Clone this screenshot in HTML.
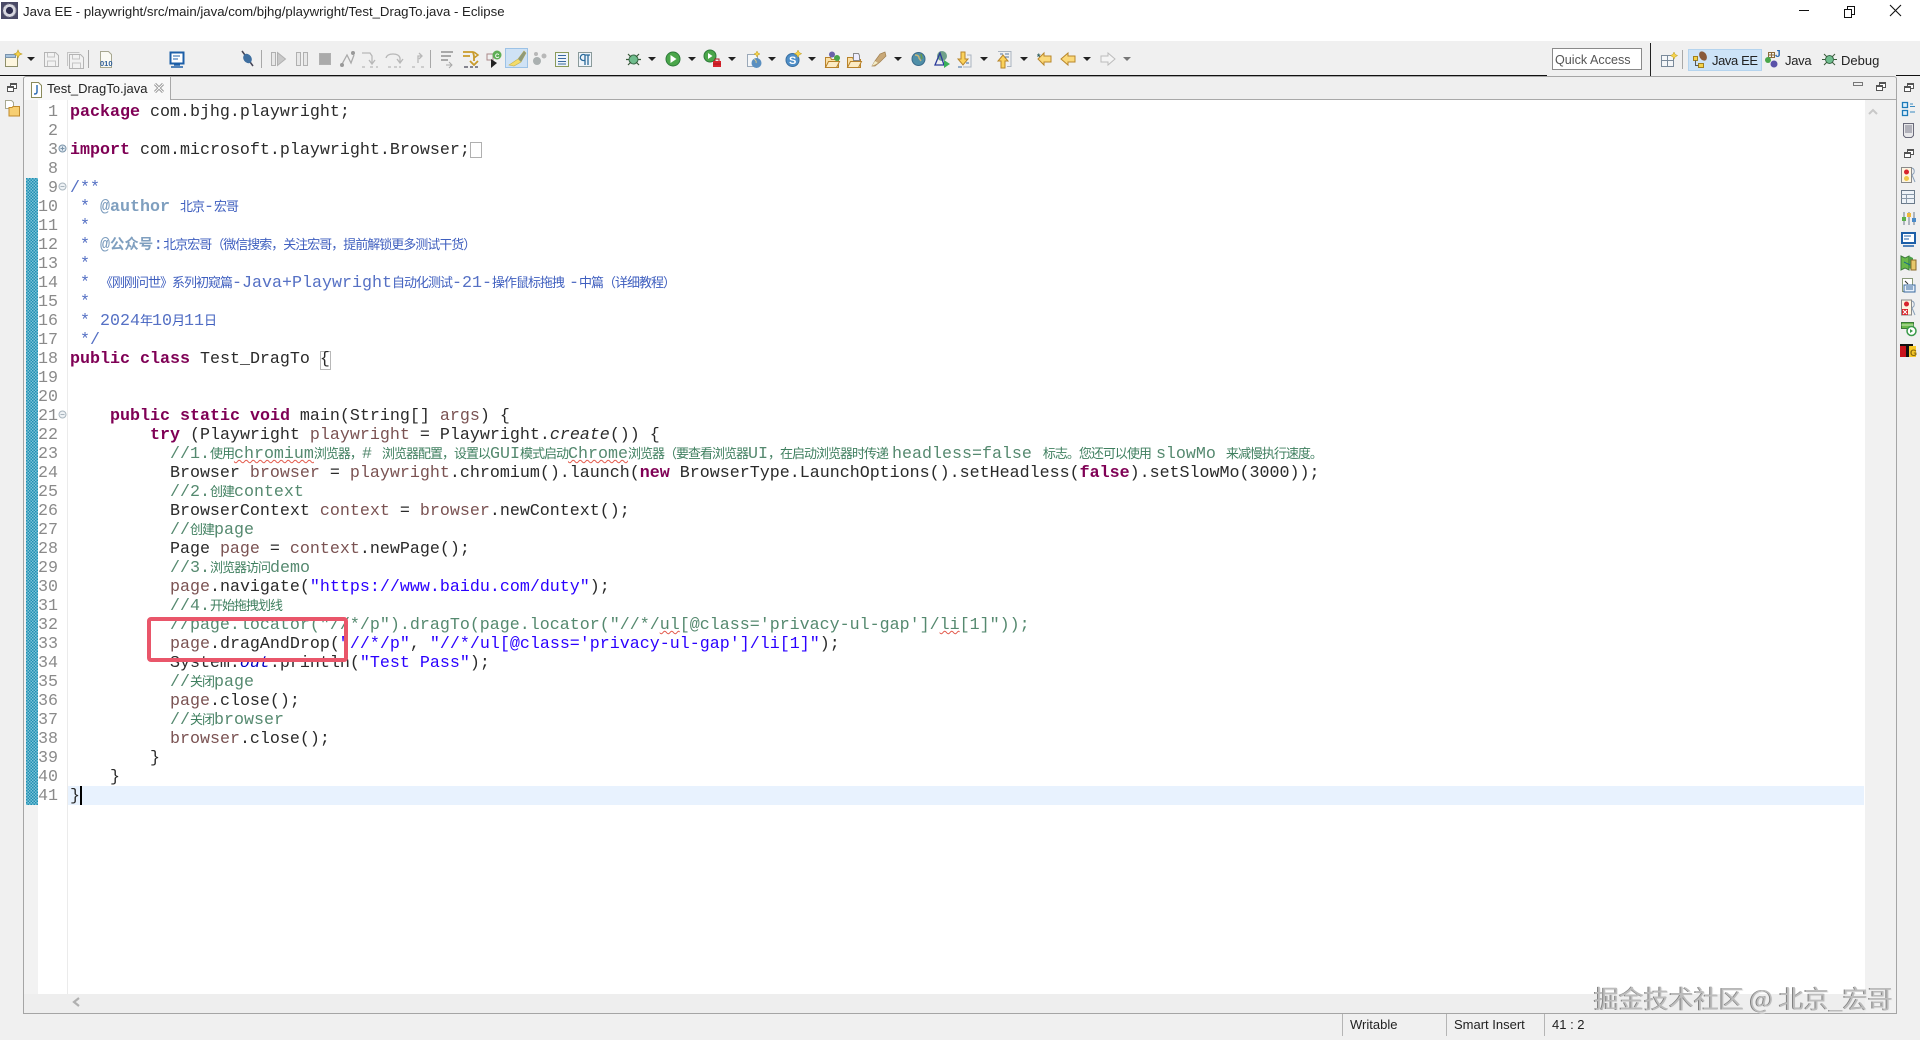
<!DOCTYPE html>
<html lang="zh"><head><meta charset="utf-8"><title>Java EE - Eclipse</title>
<style>
html,body{margin:0;padding:0;width:1920px;height:1040px;overflow:hidden;background:#fff}
body{position:relative;font-family:"Liberation Sans","Noto Sans CJK SC",sans-serif;color:#222}
.a{position:absolute}
.l{position:absolute;left:70px;margin-top:1px;height:19px;line-height:19px;white-space:pre;font-family:"Liberation Mono","Noto Sans CJK SC",monospace;font-size:16.67px;color:#2a2a2a}
.n{position:absolute;left:30px;margin-top:1px;width:28px;text-align:right;height:19px;line-height:19px;font-family:"Liberation Mono",monospace;font-size:16.67px;color:#8a8a8a}
.c{font-family:"Noto Sans CJK SC",sans-serif;font-size:13px;letter-spacing:-1px;font-weight:400;line-height:0}
.k{color:#7f0055;font-weight:700}.g{color:#55896f}.j{color:#5570c4}.t{color:#7f9fbf;font-weight:700}.s{color:#2a00ff}.v{color:#7a5252}.f{color:#0000c0;font-style:italic}
.g .c{color:#3f7f5f}.j .c{color:#3f5fbf}
.w{text-decoration:underline wavy #e2584a 1px;text-underline-offset:1px}
.u{font-size:13px;line-height:16px;white-space:pre}
</style></head><body>

<div class="a" style="left:0;top:41px;width:1920px;height:35px;background:#f0f0f0"></div>
<div class="a" style="left:0;top:76px;width:24px;height:964px;background:#f0f0f0"></div>
<div class="a" style="left:1896px;top:76px;width:24px;height:964px;background:#f0f0f0"></div>
<div class="a" style="left:0;top:1013px;width:1920px;height:27px;background:#f0f0f0"></div>
<div class="a" style="left:0;top:75px;width:1547px;height:1px;background:#111"></div>
<div class="a" style="left:1896px;top:75px;width:24px;height:1px;background:#111"></div>
<div class="a" style="left:1650px;top:43px;width:1px;height:33px;background:#222"></div>

<div class="a" style="left:24px;top:77px;width:1872px;height:22px;background:#efefef"></div>
<div class="a" style="left:24px;top:99px;width:1872px;height:1px;background:#a8a8a8"></div>
<div class="a" style="left:24px;top:77px;width:147px;height:23px;background:#f8f8f8;border-right:1px solid #a8a8a8;box-sizing:border-box"></div>
<div class="a" style="left:23px;top:76px;width:1874px;height:938px;box-sizing:border-box;border:1px solid #a5a5a5;border-radius:3px 3px 0 0"></div>
<div class="a" style="left:24px;top:100px;width:14px;height:913px;background:#f2f2f2"></div>
<div class="a" style="left:24px;top:994px;width:1872px;height:19px;background:#eeeeee"></div>
<div class="a" style="left:1865px;top:100px;width:31px;height:913px;background:#f1f1f1"></div>
<div class="a" style="left:67px;top:100px;width:1px;height:894px;background:#ebebeb"></div>
<div class="a" style="left:26px;top:178px;width:12px;height:627px;background-color:#2f9dbd;background-image:conic-gradient(#7cc3d8 25%,#1f8fb2 0 50%,#7cc3d8 0 75%,#1f8fb2 0);background-size:3px 3px"></div>
<div class="a" style="left:68px;top:786px;width:1796px;height:19px;background:#e8f2fe"></div>
<div class="a" style="left:80px;top:786px;width:2px;height:19px;background:#000"></div>
<div class="a" style="left:470px;top:142px;width:10px;height:14px;border:1px solid #b0b0b0"></div>
<div class="a" style="left:320px;top:351px;width:9px;height:17px;border:1px solid #b8b8b8"></div>

<div class="a u" style="left:23px;top:4px;font-size:13.2px">Java EE - playwright/src/main/java/com/bjhg/playwright/Test_DragTo.java - Eclipse</div>
<div class="a u" style="left:47px;top:81px">Test_DragTo.java</div>
<div class="a" style="left:1552px;top:48px;width:90px;height:22px;box-sizing:border-box;border:1px solid #8a8a8a;background:#fff;font-size:12.6px;line-height:22px;padding-left:2px;color:#555;white-space:pre">Quick Access</div>
<div class="a" style="left:1688px;top:49px;width:74px;height:22px;background:#cde3f7;border:1px solid #b5d4ee;box-sizing:border-box"></div>
<div class="a u" style="left:1712px;top:53px;letter-spacing:-.4px">Java EE</div>
<div class="a u" style="left:1785px;top:53px;letter-spacing:-.3px">Java</div>
<div class="a u" style="left:1841px;top:53px">Debug</div>
<div class="a" style="left:505px;top:48px;width:23px;height:20px;background:#cfe2f5;border:1px solid #9cc2e6;box-sizing:border-box"></div>

<div class="a" style="left:1342px;top:1014px;width:1px;height:22px;background:#b5b5b5"></div>
<div class="a" style="left:1446px;top:1014px;width:1px;height:22px;background:#b5b5b5"></div>
<div class="a" style="left:1544px;top:1014px;width:1px;height:22px;background:#b5b5b5"></div>
<div class="a u" style="left:1350px;top:1017px">Writable</div>
<div class="a u" style="left:1454px;top:1017px">Smart Insert</div>
<div class="a u" style="left:1552px;top:1017px">41 : 2</div>

<div class="n" style="top:102px">1</div><div class="n" style="top:121px">2</div><div class="n" style="top:140px">3</div><div class="n" style="top:159px">8</div><div class="n" style="top:178px">9</div>
<div class="n" style="top:197px">10</div><div class="n" style="top:216px">11</div><div class="n" style="top:235px">12</div><div class="n" style="top:254px">13</div><div class="n" style="top:273px">14</div><div class="n" style="top:292px">15</div><div class="n" style="top:311px">16</div><div class="n" style="top:330px">17</div><div class="n" style="top:349px">18</div><div class="n" style="top:368px">19</div><div class="n" style="top:387px">20</div><div class="n" style="top:406px">21</div><div class="n" style="top:425px">22</div><div class="n" style="top:444px">23</div><div class="n" style="top:463px">24</div><div class="n" style="top:482px">25</div><div class="n" style="top:501px">26</div><div class="n" style="top:520px">27</div><div class="n" style="top:539px">28</div><div class="n" style="top:558px">29</div><div class="n" style="top:577px">30</div><div class="n" style="top:596px">31</div><div class="n" style="top:615px">32</div><div class="n" style="top:634px">33</div><div class="n" style="top:653px">34</div><div class="n" style="top:672px">35</div><div class="n" style="top:691px">36</div><div class="n" style="top:710px">37</div><div class="n" style="top:729px">38</div><div class="n" style="top:748px">39</div><div class="n" style="top:767px">40</div><div class="n" style="top:786px">41</div>

<div class="l" style="top:102px"><span class="k">package</span> com.bjhg.playwright;</div>
<div class="l" style="top:140px"><span class="k">import</span> com.microsoft.playwright.Browser;</div>
<div class="l j" style="top:178px">/**</div>
<div class="l j" style="top:197px"> * <span class="t">@author</span> <span class="c">北京</span>-<span class="c">宏哥</span></div>
<div class="l j" style="top:216px"> *</div>
<div class="l j" style="top:235px"> * <span class="t">@<span style="font-family:'Noto Sans CJK SC',sans-serif;font-size:14.4px;line-height:0">公众号</span></span>:<span class="c">北京宏哥（微信搜索，关注宏哥，提前解锁更多测试干货）</span></div>
<div class="l j" style="top:254px"> *</div>
<div class="l j" style="top:273px"> * <span class="c">《刚刚问世》系列初窥篇</span>-Java+Playwright<span class="c">自动化测试</span>-21-<span class="c">操作鼠标拖拽</span><span style="margin-left:5px">-</span><span class="c">中篇（详细教程）</span></div>
<div class="l j" style="top:292px"> *</div>
<div class="l j" style="top:311px"> * 2024<span class="c">年</span>10<span class="c">月</span>11<span class="c">日</span></div>
<div class="l j" style="top:330px"> */</div>
<div class="l" style="top:349px"><span class="k">public</span> <span class="k">class</span> Test_DragTo {</div>
<div class="l" style="top:406px">    <span class="k">public</span> <span class="k">static</span> <span class="k">void</span> main(String[] <span class="v">args</span>) {</div>
<div class="l" style="top:425px">        <span class="k">try</span> (Playwright <span class="v">playwright</span> = Playwright.<i>create</i>()) {</div>
<div class="l g" style="top:444px">          //1.<span class="c">使用</span><span class="w">chromium</span><span class="c">浏览器，</span># <span class="c">浏览器配置，设置以</span>GUI<span class="c">模式启动</span><span class="w">Chrome</span><span class="c">浏览器（要查看浏览器</span>UI<span class="c">，在启动浏览器时传递</span><span style="margin-left:4px">headless=false</span><span class="c" style="margin-left:11px">标志。您还可以使用</span><span style="margin-left:5px">slowMo</span><span class="c" style="margin-left:10px">来减慢执行速度。</span></div>
<div class="l" style="top:463px">          Browser <span class="v">browser</span> = <span class="v">playwright</span>.chromium().launch(<span class="k">new</span> BrowserType.LaunchOptions().setHeadless(<span class="k">false</span>).setSlowMo(3000));</div>
<div class="l g" style="top:482px">          //2.<span class="c">创建</span>context</div>
<div class="l" style="top:501px">          BrowserContext <span class="v">context</span> = <span class="v">browser</span>.newContext();</div>
<div class="l g" style="top:520px">          //<span class="c">创建</span>page</div>
<div class="l" style="top:539px">          Page <span class="v">page</span> = <span class="v">context</span>.newPage();</div>
<div class="l g" style="top:558px">          //3.<span class="c">浏览器访问</span>demo</div>
<div class="l" style="top:577px">          <span class="v">page</span>.navigate(<span class="s">"https://www.baidu.com/duty"</span>);</div>
<div class="l g" style="top:596px">          //4.<span class="c">开始拖拽划线</span></div>
<div class="l g" style="top:615px">          //page.locator("//*/p").dragTo(page.locator("//*/<span class="w">ul</span>[@class='privacy-ul-gap']/<span class="w">li</span>[1]"));</div>
<div class="l" style="top:634px">          <span class="v">page</span>.dragAndDrop(<span class="s">"//*/p"</span>, <span class="s">"//*/ul[@class='privacy-ul-gap']/li[1]"</span>);</div>
<div class="l" style="top:653px">          System.<span class="f">out</span>.println(<span class="s">"Test Pass"</span>);</div>
<div class="l g" style="top:672px">          //<span class="c">关闭</span>page</div>
<div class="l" style="top:691px">          <span class="v">page</span>.close();</div>
<div class="l g" style="top:710px">          //<span class="c">关闭</span>browser</div>
<div class="l" style="top:729px">          <span class="v">browser</span>.close();</div>
<div class="l" style="top:748px">        }</div>
<div class="l" style="top:767px">    }</div>
<div class="l" style="top:786px">}</div>

<div class="a" style="left:147px;top:617px;width:201px;height:45px;box-sizing:border-box;border:4px solid #e9566a;border-radius:4px"></div>

<svg class="a" style="left:0;top:0" width="1920" height="1040" viewBox="0 0 1920 1040" fill="none">
<defs>
<g id="rst"><rect x="3.5" y=".5" width="6" height="5" fill="#fff" stroke="#555"/><rect x=".5" y="3.5" width="6" height="5" fill="#fff" stroke="#555"/><path d="M1 4.5h5M4 1.5h5" stroke="#555"/></g>
<g id="sav"><path d="M.5.5h11l3 3v11H.5z" fill="#f2f2f2" stroke="#b4b4b4"/><path d="M3.5 1v4h7V1M3.5 14V9h8v5" stroke="#c4c4c4"/></g>
</defs>
<!-- app icon -->
<rect x="1" y="2" width="17" height="17" fill="#4a4a66"/><circle cx="9.5" cy="10.5" r="6.500" fill="#d8d8e0" stroke="#8a8a9a" stroke-dasharray="2 1.500"/><circle cx="9.5" cy="10.5" r="3.600" fill="#2f2f4f"/>
<!-- window controls -->
<path d="M1799 10.5h10" stroke="#111"/><path d="M1844.5 9.5h7v8h-7zM1847.5 9V6.500h7v8h-3" stroke="#111"/><path d="M1890 5l11 11M1901 5l-11 11" stroke="#111" stroke-width="1.1"/>
<!-- tab icons -->
<path d="M31.500 82.500h7l3 3v12h-10z" fill="#fff" stroke="#8a8a5a"/><path d="M37 85v7q0 2-3 2" stroke="#3470b5" stroke-width="1.500"/>
<path d="M155 84l8 8M163 84l-8 8" stroke="#8a8a8a" stroke-width="2.800"/><path d="M155 84l8 8M163 84l-8 8" stroke="#f8f8f8" stroke-width="1.200"/>
<!-- left trim -->
<use href="#rst" x="7" y="83"/>
<path d="M5.500 100.500h6l2 2v6h-8z" fill="#fff" stroke="#a8a890"/><path d="M9 107.500h3l1-1h6.500v9.500H9z" fill="#f7cf72" stroke="#c08a2a"/>
<!-- view controls -->
<path d="M1853.500 82.500h9v3h-9z" stroke="#777"/><use href="#rst" x="1876" y="82"/>
<path d="M1869 114l4-4 4 4" stroke="#c8c8c8" stroke-width="2"/><path d="M79 998l-5 4 5 4" stroke="#b0b0b0" stroke-width="2.200"/>
<!-- fold -->
<g stroke="#7a93a8"><circle cx="62.500" cy="148.500" r="3.500" fill="#dfe9f2"/><path d="M60.500 148.500h4M62.500 146.500v4"/><circle cx="62.500" cy="186.500" r="3.500" fill="#eef2f5" stroke="#a8b4bd"/><path d="M60.500 186.500h4" stroke="#a8b4bd"/><circle cx="62.500" cy="414.500" r="3.500" fill="#eef2f5" stroke="#a8b4bd"/><path d="M60.500 414.500h4" stroke="#a8b4bd"/></g>
<!-- toolbar: new -->
<path d="M5.500 54.500h12v12h-12z" fill="#fdf6df" stroke="#8f8f6a"/><path d="M5.500 54.500h10v3h-10z" fill="#a7c3dc" stroke="#7a94ad"/><path d="M18 50l1.200 2.800 2.800 1.200-2.800 1.200L18 58l-1.200-2.800L14 54l2.800-1.200z" fill="#f6d24a" stroke="#b89a24" stroke-width=".6"/>
<use href="#sav" x="44" y="52"/><use href="#sav" x="69" y="54"/><path d="M67.500 66V52.500h12" stroke="#c4c4c4"/>
<path d="M88.500 50v18M261.500 50v18M430.500 50v18M1682.500 50v19" stroke="#a8a8a8"/>
<path d="M100.500 51.500h8l3 3v13h-11z" fill="#fbfbf4" stroke="#a8a890"/><text x="100" y="66" font-family="Liberation Sans" font-size="7.500" font-weight="700" fill="#2f5f9a">010</text>
<rect x="170.500" y="52.500" width="13" height="11" fill="#fff" stroke="#1d5fa8" stroke-width="2"/><path d="M173 56h7M173 59h5" stroke="#1d5fa8"/><path d="M174 65h6M171 67h12" stroke="#1d5fa8" stroke-width="1.500"/>
<path d="M242 51l11 15" stroke="#445" stroke-width="1.500"/><ellipse cx="247.500" cy="58.500" rx="4" ry="5" fill="#3f6fa0" transform="rotate(-35 247.500 58.500)"/>
<!-- debug controls -->
<g stroke="#b0b0b0" fill="#e8e8e8"><rect x="271.500" y="52.500" width="4" height="13"/><path d="M277.500 52.500l8 6.500-8 6.500z" fill="#c8c8c8"/><rect x="296.500" y="52.500" width="4" height="13"/><rect x="303.500" y="52.500" width="4" height="13"/><rect x="319.500" y="53.500" width="11" height="11" fill="#aaa"/></g>
<path d="M341 66l6-11 4 8 3-8" stroke="#aaa" stroke-width="1.300"/><circle cx="342" cy="65" r="2" fill="#999"/><circle cx="353" cy="53" r="2" fill="#999"/>
<g stroke="#b8b8b8" stroke-width="1.300"><path d="M362 53h8l2 3v7M369 60l3 4 3-4M362 67h3M370 67h3M376 67h2"/><path d="M386 58q1-4 7-4t7 4v4M397 59l3 4 3-4M388 67h3M394 67h3M399 67h2"/><path d="M412 67h3M418 63v-7h4M419 53l3 3-3 3M421 67h3"/></g>
<path d="M441 52h12M441 56h10M441 60h7" stroke="#8f8f8f" stroke-width="1.500"/><path d="M449 62l3 3-3 3" stroke="#a8a8a8"/><path d="M446 65h6" stroke="#a8a8a8"/>
<path d="M463 52h10l1 4v5M463 56h7" stroke="#c89a2a" stroke-width="1.800"/><path d="M470 61l4 4 4-4" stroke="#c89a2a" stroke-width="1.800"/><path d="M464 67h4M470 67h3M475 67h3" stroke="#445" stroke-width="1.200"/><path d="M474 52l4 3-4 3" stroke="#c89a2a" stroke-width="1.500"/>
<rect x="487" y="54" width="6" height="6" stroke="#a88" /><circle cx="497" cy="55" r="4.500" fill="#5fae55"/><path d="M491 59v9l6-5z" fill="#222"/><text x="495" y="58" font-size="6" font-weight="700" fill="#fff" font-family="Liberation Sans">C</text>
<path d="M509 65l9-6 6-8 2 2-5 9-7 4z" fill="#f4dc6a" stroke="#c8b24a" stroke-width=".6"/><path d="M518 59l6-8 2 2-5 9z" fill="#8f9a7a"/>
<circle cx="537" cy="61" r="4" fill="#aab0b0"/><circle cx="544" cy="56" r="2.500" fill="#b8b8b8"/><circle cx="536" cy="54" r="2" fill="#b8b8b8"/>
<rect x="555.500" y="52.500" width="13" height="14" fill="#eef4fa" stroke="#8a9a5a"/><path d="M558 55.500h8M558 58.500h8M558 61.500h8M558 64h8" stroke="#3a6a9f"/>
<rect x="578.500" y="52.500" width="13" height="14" fill="#eef4fa" stroke="#8a9a9a"/><path d="M588 55v10M585 55v10M585 55h5M585 55a3 3 0 1 0 0 5" stroke="#2a6a9a" stroke-width="1.300"/>
<!-- bug -->
<circle cx="633.500" cy="59.500" r="4.500" fill="#6fbd8d" stroke="#3a6a4a"/><path d="M628 54l3 3M639 54l-3 3M626 59.500h3M638 59.500h3M628 65l3-3M639 65l-3-3" stroke="#3a5a3a" stroke-width="1.200"/>
<circle cx="673" cy="59" r="7" fill="#4aa64a" stroke="#2d7a3a"/><path d="M670.500 55v8l6-4z" fill="#fff"/>
<circle cx="710" cy="56" r="6" fill="#4aa64a" stroke="#2d7a3a"/><path d="M708 53v6l4.500-3z" fill="#fff"/><rect x="713" y="61" width="8" height="6" fill="#d8242c"/><path d="M715 61v-2h4v2M713 64h8" stroke="#a81820"/>
<rect x="747.500" y="54.500" width="10" height="12" fill="#f4f6f8" stroke="#9aa8b8"/><circle cx="756.500" cy="63" r="5" fill="#5a8fc0"/><path d="M754 59q3 2 2 4" stroke="#d8c888"/><path d="M757 51l1 2 2 1-2 1-1 2-1-2-2-1 2-1z" fill="#f6d24a" stroke="#b89a24" stroke-width=".5"/>
<circle cx="792.500" cy="60" r="6.500" fill="#4f8fc8" stroke="#3a6fa0"/><text x="789" y="64" font-family="Liberation Sans" font-size="11" font-weight="700" fill="#fff">S</text><path d="M798 50l1.200 2.500 2.500 1.200-2.500 1.200-1.200 2.500-1.200-2.500-2.500-1.200 2.500-1.200z" fill="#f6d24a" stroke="#b89a24" stroke-width=".5"/>
<path d="M825.500 67.500V57.500h5l1 2h7v8z" fill="#fbe0a5" stroke="#b8822a"/><path d="M825.500 67.500l3-6h11l-3 6z" fill="#fcebc4" stroke="#b8822a"/><circle cx="832" cy="54.500" r="3" fill="#6a62aa"/><circle cx="837" cy="58" r="3" fill="#4aa64a"/>
<path d="M847.500 67.500V57.500h5l1 2h7v8z" fill="#fbe0a5" stroke="#b8822a"/><path d="M847.500 67.500l3-6h11l-3 6z" fill="#fcebc4" stroke="#b8822a"/><path d="M853.500 53.500h5l1 2v5h-6z" fill="#eef" stroke="#8a8a8a"/>
<path d="M872 66l3-5 5-7 5-2 1 4-6 6-5 4z" fill="#c8a878" stroke="#a08050" stroke-width=".7"/><path d="M872 66l3-5 3 2z" fill="#f4eec8"/>
<circle cx="918.500" cy="59" r="6.500" fill="#4f8fa8" stroke="#3a6a8a"/><path d="M915 55q4 0 4 3l2 3" stroke="#c8b878" stroke-width="1.500"/><path d="M921 54l1 5" stroke="#6a9a4a" stroke-width="1.500"/>
<circle cx="942" cy="56" r="5" fill="#6fa08a"/><path d="M940 53l-5 12h9z" stroke="#2a3a9a" stroke-width="1.300"/><path d="M944 60v8l6-4z" fill="#3ab05a"/>
<path d="M961 52h4v7h3l-5 6-5-6h3z" fill="#fbd25a" stroke="#b8862a"/><path d="M967 55h4v12h-8" stroke="#aab4c0"/><path d="M958 67h4M966 63h3" stroke="#3a6a9f"/>
<path d="M1001 68h4v-7h3l-5-6-5 6h3z" fill="#fbd25a" stroke="#b8862a"/><path d="M998 51.500h13v15h-4" stroke="#aab4c0"/><path d="M1000 54h3M1005 54h4M1005 57h4" stroke="#5a7aa0"/>
<path d="M1044 53l-6 6 6 6v-3h7v-6h-7z" fill="#fbd97a" stroke="#b8862a"/><text x="1036" y="60" font-size="9" font-weight="700" fill="#2a5a5a" font-family="Liberation Mono">*</text>
<path d="M1068 53l-7 6 7 6v-3h7v-6h-7z" fill="#fbd97a" stroke="#b8862a"/>
<path d="M1108 53l7 6-7 6v-3h-7v-6h7z" fill="#f4f4f4" stroke="#bcbcbc"/>
<!-- dropdowns -->
<path d="M27 57h8l-4 4zM648 57h8l-4 4zM688 57h8l-4 4zM728 57h8l-4 4zM768 57h8l-4 4zM808 57h8l-4 4zM894 57h8l-4 4zM980 57h8l-4 4zM1020 57h8l-4 4zM1083 57h8l-4 4z" fill="#222"/><path d="M1123 57h8l-4 4z" fill="#777"/>
<!-- perspective -->
<rect x="1661.500" y="55.500" width="12" height="11" fill="#f4f6f8" stroke="#7a8a9a"/><path d="M1661.500 60.500h12M1667.500 55.500v11" stroke="#7a8a9a"/><path d="M1674 52l1.200 2.400 2.400 1.200-2.400 1.200-1.200 2.400-1.200-2.400-2.400-1.200 2.400-1.200z" fill="#f6d24a" stroke="#b89a24" stroke-width=".5"/>
<rect x="1693.500" y="56.500" width="4" height="4" fill="#f4d24a" stroke="#a08020"/><rect x="1698.500" y="63.500" width="5" height="4" fill="#f4d24a" stroke="#a08020"/><path d="M1695.500 60.500v5h3" stroke="#555"/><ellipse cx="1703" cy="56" rx="3.500" ry="5" fill="#8a5a3a" transform="rotate(-30 1703 56)"/>
<path d="M1768.500 52.500h6v5h-6zM1771.500 52.500v5M1768.500 55h6" stroke="#8a6a3a"/><circle cx="1768" cy="60" r="3" fill="#4aa64a"/><circle cx="1774" cy="64" r="3.500" fill="#5a52a8"/><text x="1775" y="57" font-size="10" font-weight="700" fill="#2a6ab0" font-family="Liberation Sans">J</text>
<circle cx="1829.500" cy="59.500" r="4" fill="#6fbd8d" stroke="#3a6a4a"/><path d="M1824 54l3 3M1835 54l-3 3M1822 59.500h3M1834 59.500h3M1824 65l3-3M1835 65l-3-3" stroke="#3a5a3a"/>
<!-- right trim -->
<use href="#rst" x="1904" y="83"/>
<path d="M1902.500 102.500h5v5h-5zM1902.500 110.500h5v5h-5z" fill="#dfeffa" stroke="#1d7ab8" stroke-width="1.300"/><path d="M1910 104h3M1910 106.500h5M1910 112h5" stroke="#3a8ac0"/>
<path d="M1903.500 123.500h10v12l-2 2h-6l-2-2z" fill="#e8e8ea" stroke="#6a6a7a"/><path d="M1905 126h7M1905 128h7M1905 130h7M1905 132h7" stroke="#7a7a8a"/>
<use href="#rst" x="1904" y="149"/>
<rect x="1901.500" y="167.500" width="10" height="15" fill="#fdf5e0" stroke="#8a8a8a"/><circle cx="1906.500" cy="172" r="2.500" fill="#d8242c"/><circle cx="1906.500" cy="178.500" r="2.500" fill="#f0c84a"/><path d="M1912 168q3 1 2 5l-2 2 3 7" stroke="#8aa0b8"/>
<rect x="1901.500" y="190.500" width="13" height="13" fill="#eef3f8" stroke="#6a7a8a"/><path d="M1901.500 194.500h13M1901.500 198.500h13M1906.500 194.500v9" stroke="#8a9aaa"/>
<path d="M1904 212v13M1909 212v13M1914 212v13" stroke="#6a7a8a"/><rect x="1902" y="217" width="4" height="4" fill="#5ab04a"/><rect x="1907" y="213" width="4" height="4" fill="#f0b83a"/><rect x="1912" y="218" width="4" height="4" fill="#4a8ac8"/>
<rect x="1902" y="233" width="13" height="10" fill="#fff" stroke="#1d5fa8" stroke-width="2"/><path d="M1904 236h7M1904 239h5" stroke="#1d5fa8"/><path d="M1903 246h11" stroke="#1d5fa8" stroke-width="1.500"/>
<path d="M1901 256l4 2 4-2v14l-4-2-4 2z" fill="#6ab84a" stroke="#3a7a3a"/><path d="M1909 256l4 2v12l-4-2z" fill="#4aa04a"/><rect x="1911" y="260" width="5" height="10" fill="#e8c86a" stroke="#8a6a2a"/><path d="M1904 262l6 3" stroke="#1a6a8a"/>
<rect x="1902.500" y="278.500" width="10" height="13" fill="#fff" stroke="#8a9a7a"/><rect x="1904" y="285" width="11" height="7" fill="#e8f0fa" stroke="#3a6a9f"/><path d="M1905 281l3 3" stroke="#333"/><path d="M1906 287h7M1906 289h7" stroke="#3a6a9f"/>
<rect x="1901.500" y="300" width="10" height="15" fill="#fdf5e0" stroke="#8a8a8a"/><circle cx="1906.500" cy="304" r="2.500" fill="#d8242c"/><rect x="1902" y="309" width="6" height="6" fill="#d8242c"/><path d="M1903 310l4 4M1907 310l-4 4" stroke="#fff"/><path d="M1912 301q3 1 2 5l-2 2 3 7" stroke="#8aa0b8"/>
<rect x="1901.500" y="322.500" width="12" height="6" fill="#6ab84a" stroke="#3a7a3a"/><path d="M1901.500 325h12" stroke="#d0e8c0"/><circle cx="1911.500" cy="331" r="4.500" fill="#fff" stroke="#3a9a4a" stroke-width="1.500"/><path d="M1910 329v4l3-2z" fill="#3a9a4a"/>
<rect x="1900" y="344" width="9" height="13" fill="#c8141c"/><rect x="1902" y="344" width="4" height="2" fill="#111"/><path d="M1900 344h13v2h-4v11h-3v-11h-6z" fill="#111"/><rect x="1909" y="346" width="7" height="11" fill="#f6c82a"/><text x="1910" y="356" font-size="9" font-weight="700" fill="#8a6a0a" font-family="Liberation Sans">G</text>
</svg>

<div class="a" style="left:1594px;top:983px;font-family:'Noto Sans CJK SC',sans-serif;font-size:25px;font-weight:400;line-height:30px;white-space:pre;color:#bcbcbc;text-shadow:-1px 0 0 #808080,1px 1px 0 #ececec">掘金技术社区 @ 北京_宏哥</div>
</body></html>
